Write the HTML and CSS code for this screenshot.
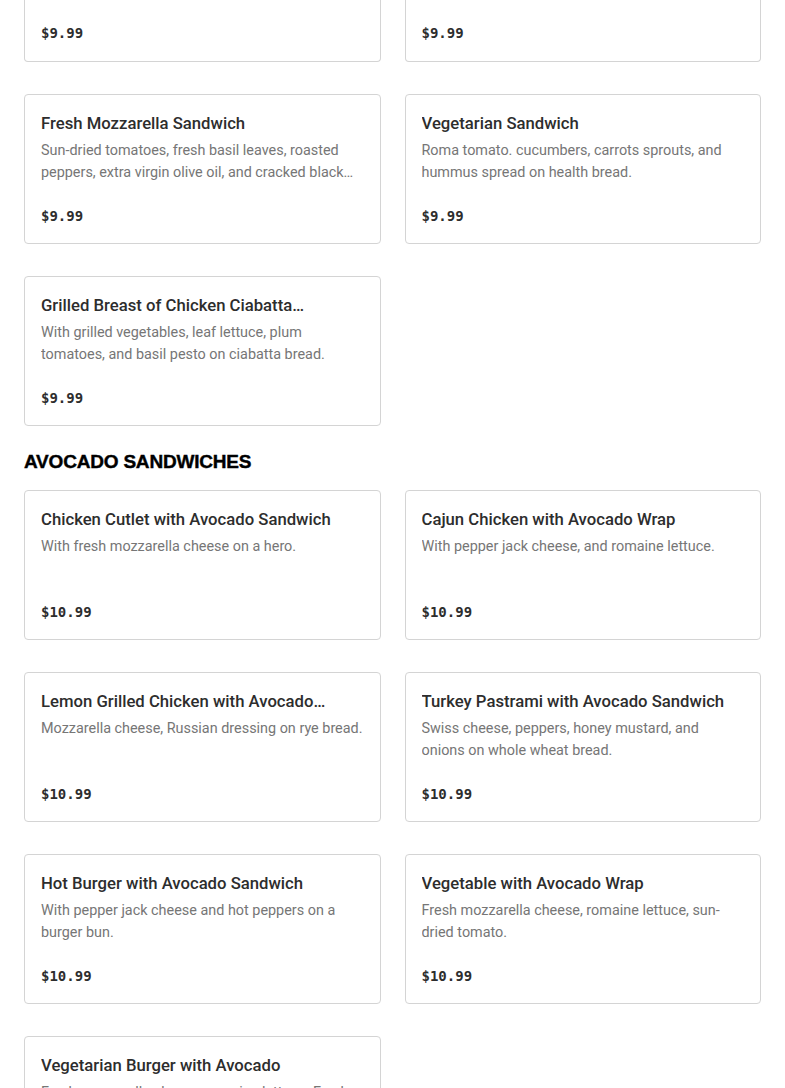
FILE: index.html
```html
<!DOCTYPE html>
<html lang="en">
<head>
<meta charset="utf-8">
<title>Menu</title>
<link rel="stylesheet" href="styles.css">
</head>
<body>
<main class="menu">
  <section class="grid">
    <div class="card card-cut"><div class="price">$9.99</div></div>
    <div class="card card-cut"><div class="price">$9.99</div></div>
    <div class="card">
      <h3 class="title">Fresh Mozzarella Sandwich</h3>
      <p class="desc">Sun-dried tomatoes, fresh basil leaves, roasted peppers, extra virgin olive oil, and cracked black pepper on a ciabatta bread.</p>
      <div class="price">$9.99</div>
    </div>
    <div class="card">
      <h3 class="title">Vegetarian Sandwich</h3>
      <p class="desc">Roma tomato. cucumbers, carrots sprouts, and hummus spread on health bread.</p>
      <div class="price">$9.99</div>
    </div>
    <div class="card">
      <h3 class="title">Grilled Breast of Chicken Ciabatta Sandwich</h3>
      <p class="desc">With grilled vegetables, leaf lettuce, plum tomatoes, and basil pesto on ciabatta bread.</p>
      <div class="price">$9.99</div>
    </div>
  </section>

  <h2 class="section-title">AVOCADO SANDWICHES</h2>

  <section class="grid">
    <div class="card">
      <h3 class="title">Chicken Cutlet with Avocado Sandwich</h3>
      <p class="desc">With fresh mozzarella cheese on a hero.</p>
      <div class="price">$10.99</div>
    </div>
    <div class="card">
      <h3 class="title">Cajun Chicken with Avocado Wrap</h3>
      <p class="desc">With pepper jack cheese, and romaine lettuce.</p>
      <div class="price">$10.99</div>
    </div>
    <div class="card">
      <h3 class="title">Lemon Grilled Chicken with Avocado Sandwich</h3>
      <p class="desc">Mozzarella cheese, Russian dressing on rye bread.</p>
      <div class="price">$10.99</div>
    </div>
    <div class="card">
      <h3 class="title">Turkey Pastrami with Avocado Sandwich</h3>
      <p class="desc">Swiss cheese, peppers, honey mustard, and onions on whole wheat bread.</p>
      <div class="price">$10.99</div>
    </div>
    <div class="card">
      <h3 class="title">Hot Burger with Avocado Sandwich</h3>
      <p class="desc">With pepper jack cheese and hot peppers on a burger bun.</p>
      <div class="price">$10.99</div>
    </div>
    <div class="card">
      <h3 class="title">Vegetable with Avocado Wrap</h3>
      <p class="desc">Fresh mozzarella cheese, romaine lettuce, sun-dried tomato.</p>
      <div class="price">$10.99</div>
    </div>
    <div class="card">
      <h3 class="title">Vegetarian Burger with Avocado</h3>
      <p class="desc">Fresh mozzarella cheese, romaine lettuce. Fresh avocado on a burger bun.</p>
      <div class="price">$10.99</div>
    </div>
  </section>
</main>
</body>
</html>
```

FILE: styles.css
```css
* { box-sizing: border-box; }

html, body {
  margin: 0;
  padding: 0;
  background: #ffffff;
}

body {
  font-family: "Roboto", "Liberation Sans", sans-serif;
  color: #2d2d2d;
  overflow: hidden;
}

.menu {
  padding: 0 24px;
}

.grid {
  display: grid;
  grid-template-columns: 1fr 1fr;
  column-gap: 24px;
  row-gap: 32px;
}

.card {
  border: 1px solid #d4d4d4;
  border-radius: 4px;
  padding: 16px 16px 16px;
  height: 150px;
  display: flex;
  flex-direction: column;
  min-width: 0;
}

.card-cut {
  height: 62px;
  border-top: none;
  border-top-left-radius: 0;
  border-top-right-radius: 0;
  justify-content: flex-end;
  padding-bottom: 17px;
}

.title {
  margin: 1px 0 0;
  font-size: 16.7px;
  line-height: 24px;
  font-weight: 500;
  color: #2d2d2d;
  height: 24px;
  display: -webkit-box;
  -webkit-line-clamp: 1;
  -webkit-box-orient: vertical;
  overflow: hidden;
}

.desc {
  margin: 4px 0 0;
  font-size: 14.4px;
  line-height: 22px;
  color: #767676;
  height: 44px;
  display: -webkit-box;
  -webkit-line-clamp: 2;
  -webkit-box-orient: vertical;
  overflow: hidden;
}

.price {
  margin-top: auto;
  font-family: "DejaVu Sans Mono", "Liberation Mono", monospace;
  font-weight: bold;
  font-size: 14px;
  line-height: 24px;
  color: #2d2d2d;
  position: relative;
  top: 1px;
}

.section-title {
  margin: 0;
  padding-top: 25px;
  margin-bottom: 17px;
  font-family: "Liberation Sans", Arial, sans-serif;
  font-weight: 900;
  font-size: 19px;
  letter-spacing: -0.2px;
  line-height: 22px;
  color: #000000;
  -webkit-text-stroke: 0.4px #000000;
}
```
